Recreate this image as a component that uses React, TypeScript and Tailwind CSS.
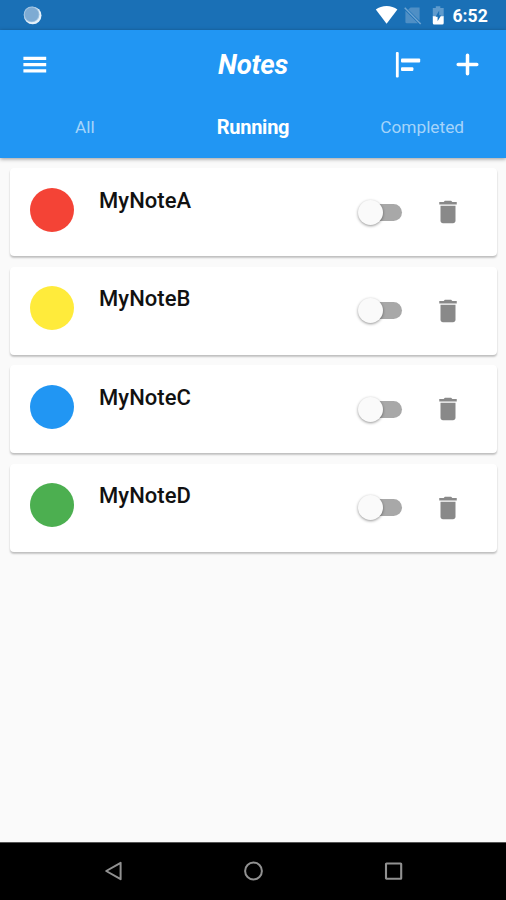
type Note = { name: string; color: string };

const notes: Note[] = [
  { name: 'MyNoteA', color: 'bg-[#f44336]' },
  { name: 'MyNoteB', color: 'bg-[#ffeb3b]' },
  { name: 'MyNoteC', color: 'bg-[#2196f3]' },
  { name: 'MyNoteD', color: 'bg-[#4caf50]' },
];

function StatusBar() {
  return (
    <div className="flex h-[30px] shrink-0 items-center justify-between bg-[#1a70b6] pr-[18.5px] pl-[23px]">
      <svg width="19" height="19" viewBox="0 0 19 19">
        <circle cx="9.7" cy="9.5" r="8.8" fill="#e6f1fa" />
        <circle cx="8.6" cy="8.4" r="7.9" fill="#a3c5e2" />
        <circle cx="8.7" cy="8.5" r="6.9" fill="#7eabd3" />
      </svg>
      <div className="flex items-center">
        <svg width="120" height="30" viewBox="370 0 120 30" className="-mr-[37px]">
          <path d="M375.8 9.6C381.5 4.9 391.7 4.9 397.4 9.6L386.6 23.8Z" fill="#fff" />
          <path d="M410.5 7.5H419.6V20.8L408.2 9.5ZM405.4 10.8L418 23.3H406.8Q405.4 23.3 405.4 22Z" fill="#4f8fc5" />
          <path d="M404.7 7.7L420.7 24" stroke="#6ea4d2" strokeWidth="1.5" />
          <path d="M435.8 6.3H440.3V8H443.7V17H432.8V8H435.8Z" fill="#5f9bcd" />
          <path d="M432.8 16.2H443.7V23Q443.7 24.5 442.3 24.5H434.2Q432.8 24.5 432.8 23Z" fill="#fff" />
          <path d="M439.2 10.5L435.6 16.8H437.6V21.3L441.2 15.3H439.2Z" fill="#1a70b6" />
        </svg>
        <span className="mt-[3px] w-[35px] text-[17.6px] leading-none font-bold text-white">6:52</span>
      </div>
    </div>
  );
}

function AppBar() {
  return (
    <header className="relative z-10 flex h-[127.5px] shrink-0 flex-col bg-[#2196f3] shadow-[0_1px_4px_rgba(0,0,0,0.4)]">
      <div className="flex h-[69px] items-center justify-between pr-[27px] pl-[23px]">
        <div className="flex flex-1">
          <svg width="24" height="18" viewBox="0 0 24 18" fill="#fff">
            <path d="M.4 .8H23.2V4.1H.4ZM.4 7H23.2V10.3H.4ZM.4 13.2H23.2V16.5H.4Z" />
          </svg>
        </div>
        <h1 className="mr-[-4px] text-[27.5px] font-bold italic tracking-[-0.25px] text-white">Notes</h1>
        <div className="flex flex-1 items-center justify-end gap-[35px]">
          <svg width="26" height="26" viewBox="0 0 26 26" fill="#fff">
            <rect x=".9" y="0" width="2.8" height="25.5" rx="1" />
            <rect x="6" y="6.6" width="19.2" height="3.8" rx="1" />
            <rect x="6" y="15.2" width="12.4" height="3.9" rx="1" />
          </svg>
          <svg width="23" height="23" viewBox="0 0 23 23" fill="none" stroke="#fff" strokeWidth="3.5" strokeLinecap="round">
            <path d="M11.5 2.2V20.8M2.2 11.5H20.8" />
          </svg>
        </div>
      </div>
      <nav className="grid h-[58px] grid-cols-3 items-center text-center">
        <span className="pl-px text-[17.3px] text-[#a5d4fa]">All</span>
        <span className="-mt-[2px] text-[20px] font-bold tracking-[-0.25px] text-white">Running</span>
        <span className="pl-px text-[17.3px] text-[#a5d4fa]">Completed</span>
      </nav>
    </header>
  );
}

function NoteCard({ name, color }: Note) {
  return (
    <li className="flex h-[88px] rounded-[4px] bg-white pl-[20px] shadow-[0_2px_2px_rgba(0,0,0,0.2),0_1px_2px_rgba(0,0,0,0.06)]">
      <div className={`mt-[19.5px] h-[44px] w-[44px] rounded-full ${color}`} />
      <span className="mt-[17.5px] ml-[25px] flex-1 text-[22px] leading-[30px] font-medium tracking-[0.06px] text-[#111]">{name}</span>
      <div className="mt-[31.5px] flex h-[25px] w-[45px] items-center">
        <div className="z-10 h-[25px] w-[25px] shrink-0 rounded-full bg-[#fafafa] shadow-[0_1px_3px_rgba(0,0,0,0.42)]" />
        <div className="-ml-[17px] h-[17px] w-[36.5px] shrink-0 rounded-full bg-[#a8a8a8]" />
      </div>
      <svg className="mt-[29px] mr-[34px] ml-[30px]" width="30" height="30" viewBox="0 0 24 24" fill="#898989">
        <path d="M6 19c0 1.1.9 2 2 2h8c1.1 0 2-.9 2-2V7H6v12zM19 4h-3.5l-1-1h-5l-1 1H5v2h14V4z" />
      </svg>
    </li>
  );
}

function NavigationBar() {
  return (
    <div className="flex h-[58.5px] shrink-0 items-center justify-between border-t border-[#555] bg-black px-[103px]">
      <svg width="20" height="20" viewBox="0 0 20 20" fill="none" stroke="#919191" strokeWidth="2" strokeLinejoin="round">
        <path d="M3.2 10L17.6 1.8V18.2Z" />
      </svg>
      <svg width="20" height="20" viewBox="0 0 20 20" fill="none" stroke="#919191" strokeWidth="2">
        <circle cx="10.5" cy="10" r="8.4" />
      </svg>
      <svg width="20" height="20" viewBox="0 0 20 20" fill="none" stroke="#919191" strokeWidth="2.1">
        <rect x="3" y="2.5" width="15.2" height="15.2" rx=".5" />
      </svg>
    </div>
  );
}

export default function App() {
  return (
    <div className="flex h-[900px] w-[506px] flex-col overflow-hidden bg-[#fafafa] font-['Roboto',sans-serif]">
      <StatusBar />
      <AppBar />
      <ul className="flex flex-1 flex-col gap-[10.5px] pt-[10.5px] pr-[9.25px] pl-[10px]">
        {notes.map((note) => (
          <NoteCard key={note.name} {...note} />
        ))}
      </ul>
      <NavigationBar />
    </div>
  );
}
